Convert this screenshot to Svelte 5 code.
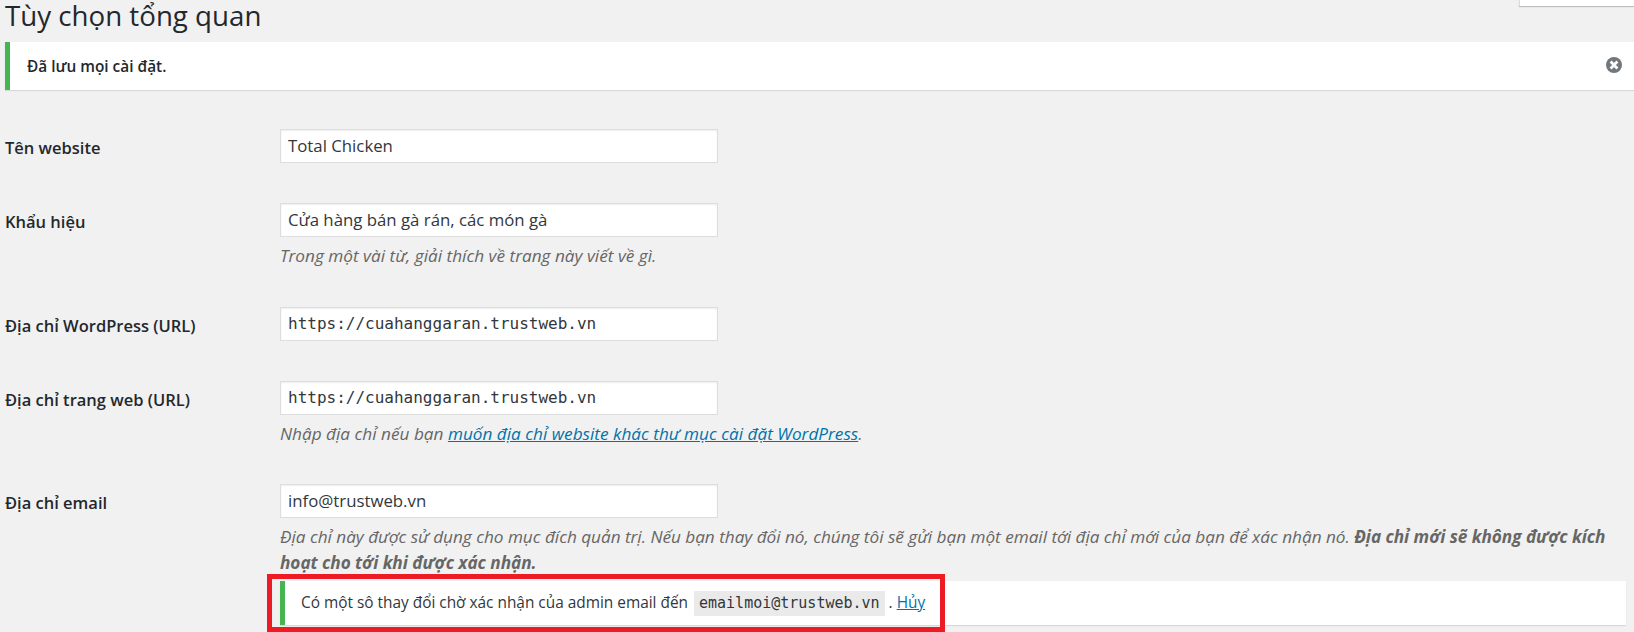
<script>
  const rows = [
    { label: "Tên website", value: "Total Chicken" },
    { label: "Khẩu hiệu", value: "Cửa hàng bán gà rán, các món gà", hint: "Trong một vài từ, giải thích về trang này viết về gì." },
    { label: "Địa chỉ WordPress (URL)", value: "https://cuahanggaran.trustweb.vn", mono: true },
    { label: "Địa chỉ trang web (URL)", value: "https://cuahanggaran.trustweb.vn", mono: true, linkHint: true }
  ];
</script>

<div class="screen-tab"></div>

<main>
  <h1>Tùy chọn tổng quan</h1>

  <div class="notice top">
    <p>Đã lưu mọi cài đặt.</p>
    <button class="dismiss" aria-label="Đóng">
      <svg viewBox="0 0 16 16" width="16" height="16">
        <circle cx="8" cy="8" r="8" fill="#72777c" />
        <path d="M4.6 4.6 L11.4 11.4 M11.4 4.6 L4.6 11.4" stroke="#fff" stroke-width="2.8" />
      </svg>
    </button>
  </div>

  <form>
    {#each rows as row}
      <div class="row" class:tight={row.linkHint}>
        <label for={row.label}>{row.label}</label>
        <div class="field">
          <input id={row.label} class:mono={row.mono} type="text" value={row.value} />
          {#if row.hint}
            <p class="hint">{row.hint}</p>
          {/if}
          {#if row.linkHint}
            <p class="hint">Nhập địa chỉ nếu bạn <a href="#top">muốn địa chỉ website khác thư mục cài đặt WordPress</a>.</p>
          {/if}
        </div>
      </div>
    {/each}

    <div class="row last">
      <label for="email">Địa chỉ email</label>
      <div class="field">
        <input id="email" type="text" value="info@trustweb.vn" />
        <p class="hint long">Địa chỉ này được sử dụng cho mục đích quản trị. Nếu bạn thay đổi nó, chúng tôi sẽ gửi bạn một email tới địa chỉ mới của bạn để xác nhận nó. <strong>Địa chỉ mới sẽ không được kích hoạt cho tới khi được xác nhận.</strong></p>
        <div class="notice pending">
          <p>Có một sô thay đổi chờ xác nhận của admin email đến <code>emailmoi@trustweb.vn</code> . <a href="#top">Hủy</a></p>
          <div class="highlight"></div>
        </div>
      </div>
    </div>
  </form>
</main>

<style>
  :global(html), :global(body) {
    overflow: hidden;
    background: #f1f1f1;
  }

  main {
    padding-left: 5px;
    color: #23282d;
    font-family: "Open Sans", "Noto Sans", sans-serif;
    font-size: 15px;
  }

  h1 {
    margin: 0;
    height: 42px;
    font-size: 27.7px;
    line-height: 30px;
    font-weight: 400;
  }

  p {
    margin: 0;
  }

  .notice {
    position: relative;
    display: flex;
    align-items: center;
    background: #fff;
    border-left: 5px solid #46b450;
    box-shadow: 0 1px 1px rgba(0, 0, 0, 0.1);
    box-sizing: border-box;
  }

  .top {
    height: 48px;
    padding-left: 17px;
    margin-bottom: 39px;
    font-size: 15.4px;
    font-weight: 600;
  }

  .dismiss {
    position: absolute;
    right: 12px;
    top: 15px;
    width: 16px;
    height: 16px;
    padding: 0;
    border: 0;
    background: none;
  }

  .dismiss svg {
    display: block;
  }

  .row {
    display: grid;
    grid-template-columns: 275px 1fr;
    padding-bottom: 40.5px;
  }

  .row.tight {
    padding-bottom: 39.5px;
  }

  .row.last {
    padding-bottom: 7px;
    padding-right: 8px;
  }

  label {
    padding-top: 9px;
    font-weight: 600;
    font-size: 16.5px;
    line-height: 20px;
  }

  input {
    display: block;
    box-sizing: border-box;
    width: 438px;
    height: 33.5px;
    margin: 0;
    padding: 0 7px;
    border: 1px solid #ddd;
    box-shadow: inset 0 1px 2px rgba(0, 0, 0, 0.07);
    background: #fff;
    color: #32373c;
    font-family: inherit;
    font-size: 16.8px;
    outline: 0;
  }

  input.mono {
    font-family: "DejaVu Sans Mono", monospace;
    font-size: 16px;
  }

  .hint {
    margin-top: 7px;
    color: #666;
    font-style: italic;
    font-size: 17.2px;
    line-height: 23px;
  }

  .hint.long {
    margin-top: 6.5px;
    line-height: 26px;
    letter-spacing: -0.03px;
  }

  .hint a, .pending a {
    color: #0073aa;
  }

  .pending {
    height: 44px;
    margin-top: 5px;
    padding-left: 16px;
    font-size: 15.4px;
  }

  .pending p {
    color: #32373c;
  }

  code {
    display: inline-block;
    height: 25px;
    margin-left: 2px;
    padding: 0 5px;
    background: #eaeaea;
    font-family: "DejaVu Sans Mono", monospace;
    font-size: 15px;
    line-height: 25px;
  }

  .highlight {
    position: absolute;
    left: -18px;
    top: -7px;
    box-sizing: border-box;
    width: 678px;
    height: 58px;
    border: 5px solid #ed1c24;
    pointer-events: none;
  }

  .screen-tab {
    position: absolute;
    top: 0;
    right: 0;
    width: 114px;
    height: 6px;
    background: #fff;
    box-shadow: 0 1px 1px rgba(0, 0, 0, 0.2);
    border-left: 1px solid #ddd;
  }
</style>
